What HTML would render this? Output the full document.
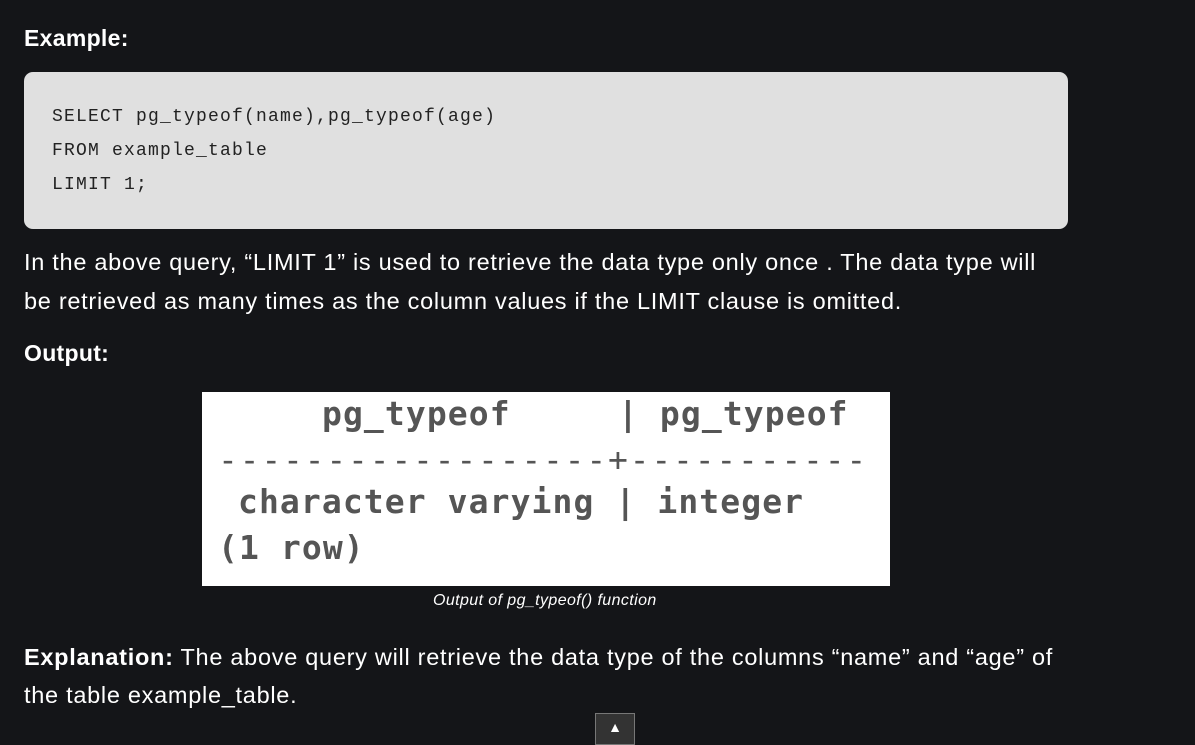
<!DOCTYPE html>
<html><head><style>
body{margin:0;background:#141518;width:1195px;height:731px;overflow:hidden;font-family:"Liberation Sans",sans-serif;color:#fff;position:relative}
.a{position:absolute;white-space:nowrap}
.code{position:absolute;left:24px;top:72px;width:1044px;height:157px;background:#e0e0e0;border-radius:9px}
.code div{position:absolute;left:28px;font-family:"Liberation Mono",monospace;font-size:18px;color:#222;letter-spacing:1.2px}
.p{font-size:23.5px;letter-spacing:0.72px}
.h{font-size:23px;font-weight:bold;letter-spacing:0.3px}
.img{position:absolute;left:202px;top:392px;width:688px;height:194px;background:#fff;overflow:hidden}
.img div{position:absolute;font-family:"DejaVu Sans Mono","Liberation Mono",monospace;font-size:33px;color:#555;white-space:pre;font-weight:bold;letter-spacing:1.1px}
</style></head><body>
<div class="a h" style="left:24px;top:25px">Example:</div>
<div class="code">
<div style="top:35px">SELECT pg_typeof(name),pg_typeof(age)</div>
<div style="top:69px">FROM example_table</div>
<div style="top:103px">LIMIT 1;</div>
</div>
<div class="a p" style="left:24px;top:249px">In the above query, “LIMIT 1” is used to retrieve the data type only once . The data type will</div>
<div class="a p" style="left:24px;top:288px">be retrieved as many times as the column values if the LIMIT clause is omitted.</div>
<div class="a h" style="left:24px;top:340px">Output:</div>
<div class="img">
<div style="left:120px;top:2px">pg_typeof</div>
<div style="left:416px;top:2px">| pg_typeof</div>
<div style="left:16px;top:48px;font-weight:normal;letter-spacing:1.8px">------------------+-----------</div>
<div style="left:36px;top:90px">character varying | integer</div>
<div style="left:16px;top:136px">(1 row)</div>
</div>
<div class="a" style="left:433px;top:592px;font-size:16px;font-style:italic;letter-spacing:0.4px">Output of pg_typeof() function</div>
<div class="a p" style="left:24px;top:644px"><b>Explanation:</b> The above query will retrieve the data type of the columns “name” and “age” of</div>
<div class="a p" style="left:24px;top:682px">the table example_table.</div>
<div class="a" style="left:595px;top:713px;width:38px;height:30px;background:#333;border:1px solid #777;color:#fff;font-size:14px;text-align:center;line-height:26px">▲</div>
</body></html>
